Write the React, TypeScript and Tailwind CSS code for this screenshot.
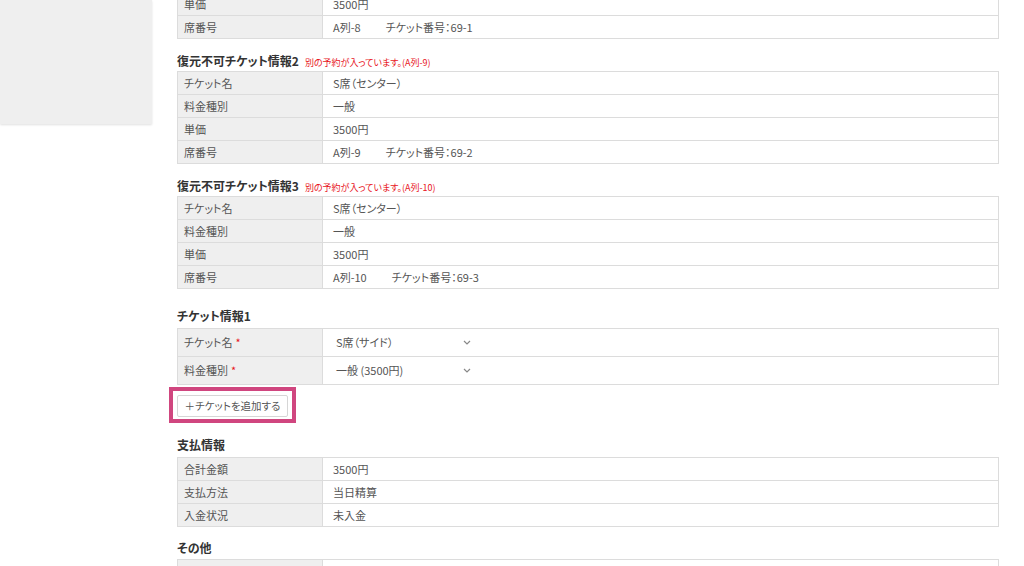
import type { ReactNode } from 'react'

const font = { fontFamily: '"Noto Sans CJK JP", "Noto Sans", sans-serif' }

type Row = { label: string; value: ReactNode; required?: boolean }

function Heading({ title, note, className }: { title: string; note?: string; className: string }) {
  return (
    <div className={`flex items-baseline h-[16px] leading-[16px] ${className}`}>
      <span className="text-[12px] font-bold text-[#333]">{title}</span>
      {note && <span className="ml-[6px] text-[9px] text-[#e8141c]">{note}</span>}
    </div>
  )
}

function InfoTable({ rows, rowH = 'h-[23px]' }: { rows: Row[]; rowH?: string }) {
  return (
    <div className="border border-[#dcdcdc] border-b-0">
      {rows.map((r, i) => (
        <div key={i} className={`flex ${rowH} border-b border-[#dcdcdc] text-[11px] text-[#555]`}>
          <div className="w-[145px] shrink-0 bg-[#efefef] border-r border-[#dcdcdc] flex items-center pl-[6px]">
            {r.label}
            {r.required && <span className="ml-[3px] text-[#e8141c]">*</span>}
          </div>
          <div className="flex-1 flex items-center pl-[10px]">{r.value}</div>
        </div>
      ))}
    </div>
  )
}

function Seat({ seat, no }: { seat: string; no: string }) {
  return (
    <span>
      {seat}
      <span className="ml-[25px]">チケット番号：{no}</span>
    </span>
  )
}

function FakeSelect({ value }: { value: string }) {
  return (
    <div className="ml-[-3px] w-[147px] h-[22px] bg-white rounded-[2px] flex items-center justify-between px-[6px] text-[11px] text-[#555]">
      <span>{value}</span>
      <svg width="8" height="5" viewBox="0 0 8 5" fill="none" stroke="#888" strokeWidth="1.2">
        <path d="M1 1l3 3 3-3" />
      </svg>
    </div>
  )
}

const ticketRows = (seat: string, no: string): Row[] => [
  { label: 'チケット名', value: 'S席（センター）' },
  { label: '料金種別', value: '一般' },
  { label: '単価', value: '3500円' },
  { label: '席番号', value: <Seat seat={seat} no={no} /> },
]

export default function App() {
  return (
    <div className="w-[1024px] h-[566px] overflow-hidden bg-white flex [font-feature-settings:'palt']" style={font}>
      <div className="w-[152px] shrink-0 self-start h-[124px] bg-[#efefef] shadow-[0_1px_2px_rgba(0,0,0,0.12)]" />
      <div className="ml-[25px] w-[822px] shrink-0">
        <div className="mt-[-8px]">
          <InfoTable
            rows={[
              { label: '単価', value: '3500円' },
              { label: '席番号', value: <Seat seat="A列-8" no="69-1" /> },
            ]}
          />
        </div>

        <Heading title="復元不可チケット情報2" note="別の予約が入っています。(A列-9)" className="mt-[14px] mb-[2px]" />
        <InfoTable rows={ticketRows('A列-9', '69-2')} />

        <Heading title="復元不可チケット情報3" note="別の予約が入っています。(A列-10)" className="mt-[14px] mb-[2px]" />
        <InfoTable rows={ticketRows('A列-10', '69-3')} />

        <Heading title="チケット情報1" className="mt-[19px] mb-[4px]" />
        <InfoTable
          rowH="h-[28px]"
          rows={[
            { label: 'チケット名', required: true, value: <FakeSelect value="S席（サイド）" /> },
            { label: '料金種別', required: true, value: <FakeSelect value="一般 (3500円)" /> },
          ]}
        />

        <div className="mt-[2px] ml-[-8px] inline-flex border-[4px] border-[#d0467f] px-[4px] pt-[4px] pb-[2px]">
          <button className="h-[22px] w-[111px] whitespace-nowrap border border-[#d6d6d6] bg-white rounded-[2px] text-[10.5px] text-[#555] flex items-center justify-center">
            ＋チケットを追加する
          </button>
        </div>

        <Heading title="支払情報" className="mt-[14px] mb-[4px]" />
        <InfoTable
          rows={[
            { label: '合計金額', value: '3500円' },
            { label: '支払方法', value: '当日精算' },
            { label: '入金状況', value: '未入金' },
          ]}
        />

        <Heading title="その他" className="mt-[13px] mb-[3px]" />
        <InfoTable rows={[{ label: '', value: '' }]} />
      </div>
    </div>
  )
}
